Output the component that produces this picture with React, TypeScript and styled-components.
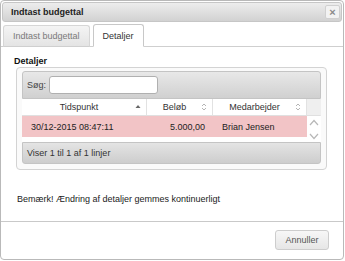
import React from 'react';
import styled, { createGlobalStyle } from 'styled-components';

const GlobalStyle = createGlobalStyle`
  html, body {
    margin: 0;
    padding: 0;
    background: #ffffff;
  }
  body {
    font-family: 'Liberation Sans', Arial, sans-serif;
    font-size: 9px;
    color: #222;
  }
  * {
    box-sizing: border-box;
  }
`;

const Dialog = styled.div`
  width: 344px;
  height: 260px;
  border: 1px solid #b9b9b9;
  border-radius: 4px;
  background: #fff;
  display: flex;
  flex-direction: column;
  overflow: hidden;
`;

const TitleBar = styled.div`
  margin: 1px 1px 0 1px;
  height: 20px;
  border: 1px solid #c6c6c6;
  border-radius: 3px;
  background: linear-gradient(#ededed, #d2d2d2);
  display: flex;
  align-items: center;
  justify-content: space-between;
  padding: 0 1px 0 8px;
`;

const Title = styled.span`
  font-weight: bold;
  font-size: 9px;
  color: #222;
`;

const CloseButton = styled.button`
  width: 15px;
  height: 14px;
  padding: 0;
  border: 1px solid #d0d0d0;
  border-radius: 2px;
  background: #f2f2f2;
  color: #8a8a8a;
  font-family: 'Liberation Sans', Arial, sans-serif;
  font-weight: bold;
  font-size: 11px;
  line-height: 11px;
  display: flex;
  align-items: center;
  justify-content: center;
`;

const TabBar = styled.div`
  display: flex;
  align-items: flex-end;
  gap: 3px;
  height: 25px;
  padding-left: 2px;
  border-bottom: 1px solid #cfcfcf;
`;

const Tab = styled.div<{ $active?: boolean }>`
  height: ${(p) => (p.$active ? '23px' : '22px')};
  margin-bottom: -1px;
  padding: 0 9px;
  display: flex;
  align-items: center;
  border: 1px solid ${(p) => (p.$active ? '#c8c8c8' : '#d6d6d6')};
  border-bottom-color: ${(p) => (p.$active ? '#fff' : '#cfcfcf')};
  border-radius: 3px 3px 0 0;
  background: ${(p) => (p.$active ? '#fff' : 'linear-gradient(#f4f4f4, #e4e4e4)')};
  color: ${(p) => (p.$active ? '#333' : '#7a7a7a')};
  font-size: 9px;
`;

const Panel = styled.div`
  flex: 1;
  padding: 9px 15px 0 15px;
`;

const SectionLabel = styled.div`
  font-weight: bold;
  font-size: 9px;
  line-height: 11px;
  margin-left: -2px;
  color: #111;
`;

const TableWrapper = styled.div`
  width: 311px;
  margin-top: 0;
  border: 1px solid #d3d3d3;
  border-radius: 4px;
  background: #fafafa;
  padding: 3px 5px 5px 5px;
`;

const Toolbar = styled.div`
  height: 28px;
  border: 1px solid #c4c4c4;
  border-radius: 3px 3px 0 0;
  background: linear-gradient(#e8e8e8, #d0d0d0);
  display: flex;
  align-items: center;
  padding-left: 4px;
  gap: 3px;
  color: #444;
`;

const SearchInput = styled.input`
  width: 109px;
  height: 18px;
  border: 1px solid #b0b0b0;
  border-radius: 3px;
  background: #fff;
  padding: 0 3px;
  font-family: inherit;
  font-size: 9px;
`;

const Grid = styled.div`
  display: grid;
  grid-template-columns: 125px 66px 94px 14px;
`;

const HeadCell = styled.div<{ $scroll?: boolean }>`
  height: 17px;
  position: relative;
  display: flex;
  align-items: center;
  justify-content: center;
  padding-right: 10px;
  background: ${(p) => (p.$scroll ? '#efefef' : '#fff')};
  border-right: 1px solid ${(p) => (p.$scroll ? 'transparent' : '#e2e2e2')};
  border-bottom: 1px solid #e0e0e0;
  color: #333;
`;

const SortIcon = styled.span`
  position: absolute;
  right: 5px;
  top: 5px;
  display: flex;
`;

const Cell = styled.div<{ $align?: 'left' | 'right' }>`
  height: 21px;
  display: flex;
  align-items: center;
  justify-content: ${(p) => (p.$align === 'right' ? 'flex-end' : 'flex-start')};
  padding: ${(p) => (p.$align === 'right' ? '0 8px 0 0' : '0 0 0 9px')};
  background: #f2c4c6;
  color: #222;
`;

const ScrollTrack = styled.div`
  grid-row: span 2;
  background: #fff;
  display: flex;
  flex-direction: column;
  align-items: center;
  justify-content: space-between;
  padding: 3px 0 2px;
`;

const Filler = styled.div`
  grid-column: span 3;
  height: 5px;
  background: #fff;
`;

const Footer = styled.div`
  height: 22px;
  border: 1px solid #c4c4c4;
  border-radius: 0 0 3px 3px;
  background: linear-gradient(#e4e4e4, #cdcdcd);
  display: flex;
  align-items: center;
  padding-left: 4px;
  color: #333;
`;

const Note = styled.p`
  margin: 24px 0 0 1px;
  font-size: 9px;
  color: #222;
`;

const ButtonPane = styled.div`
  height: 38px;
  border-top: 1px solid #c9c9c9;
  display: flex;
  justify-content: flex-end;
  align-items: flex-start;
  padding: 8px 14px 0 0;
`;

const Button = styled.button`
  width: 54px;
  height: 20px;
  border: 1px solid #cdcdcd;
  border-radius: 3px;
  background: linear-gradient(#f7f7f7, #e6e6e6);
  color: #555;
  font-family: inherit;
  font-size: 9px;
  padding: 0;
`;

const SortAsc = () => (
  <svg width="6" height="5" viewBox="0 0 6 5">
    <path d="M3 1 L5.5 4 L0.5 4 Z" fill="#666" />
  </svg>
);

const SortBoth = () => (
  <svg width="6" height="8" viewBox="0 0 6 8">
    <path d="M1 3 L3 1 L5 3" stroke="#b5b5b5" strokeWidth="1" fill="none" />
    <path d="M1 5 L3 7 L5 5" stroke="#b5b5b5" strokeWidth="1" fill="none" />
  </svg>
);

const Chevron = ({ up }: { up?: boolean }) => (
  <svg width="10" height="7" viewBox="0 0 10 7">
    <path
      d={up ? 'M1 6 L5 1.5 L9 6' : 'M1 1 L5 5.5 L9 1'}
      stroke="#b8b8b8"
      strokeWidth="1.2"
      fill="none"
    />
  </svg>
);

export default function App() {
  return (
    <>
      <GlobalStyle />
      <Dialog>
        <TitleBar>
          <Title>Indtast budgettal</Title>
          <CloseButton type="button">×</CloseButton>
        </TitleBar>
        <TabBar>
          <Tab>Indtast budgettal</Tab>
          <Tab $active>Detaljer</Tab>
        </TabBar>
        <Panel>
          <SectionLabel>Detaljer</SectionLabel>
          <TableWrapper>
            <Toolbar>
              <span>Søg:</span>
              <SearchInput type="text" />
            </Toolbar>
            <Grid>
              <HeadCell>
                Tidspunkt
                <SortIcon>
                  <SortAsc />
                </SortIcon>
              </HeadCell>
              <HeadCell>
                Beløb
                <SortIcon style={{ top: 4 }}>
                  <SortBoth />
                </SortIcon>
              </HeadCell>
              <HeadCell>
                Medarbejder
                <SortIcon style={{ top: 4 }}>
                  <SortBoth />
                </SortIcon>
              </HeadCell>
              <HeadCell $scroll />
              <Cell>30/12-2015 08:47:11</Cell>
              <Cell $align="right">5.000,00</Cell>
              <Cell>Brian Jensen</Cell>
              <ScrollTrack>
                <Chevron up />
                <Chevron />
              </ScrollTrack>
              <Filler />
            </Grid>
            <Footer>Viser 1 til 1 af 1 linjer</Footer>
          </TableWrapper>
          <Note>Bemærk! Ændring af detaljer gemmes kontinuerligt</Note>
        </Panel>
        <ButtonPane>
          <Button type="button">Annuller</Button>
        </ButtonPane>
      </Dialog>
    </>
  );
}
